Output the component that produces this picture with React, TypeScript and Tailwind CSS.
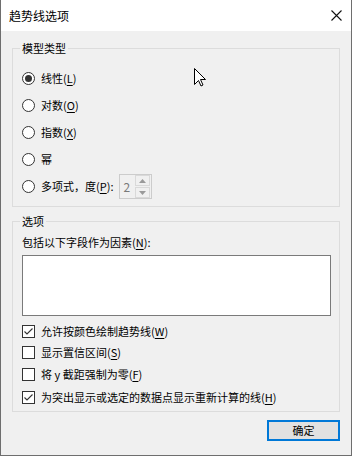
import React from "react";

const font = { fontFamily: '"Noto Sans CJK SC", "Noto Sans", sans-serif' };

function Radio({ checked }: { checked?: boolean }) {
  return (
    <span className="flex h-[13px] w-[13px] shrink-0 items-center justify-center rounded-full border border-[#333333] bg-white">
      {checked && <span className="h-[7px] w-[7px] rounded-full bg-[#333333]" />}
    </span>
  );
}

function Check({ checked }: { checked?: boolean }) {
  return (
    <span className="flex h-[13px] w-[13px] shrink-0 items-center justify-center border border-[#333333] bg-white">
      {checked && (
        <svg viewBox="0 0 11 11" width="11" height="11" fill="none" aria-hidden>
          <polyline points="1.5,5.5 4,8 9.5,2.5" stroke="#333333" strokeWidth="1.1" />
        </svg>
      )}
    </span>
  );
}

// 带下划线的快捷键
function Key({ k }: { k: string }) {
  return (
    <>
      (<u className="underline-offset-2">{k}</u>)
    </>
  );
}

function GroupBox({
  label,
  className,
  children,
}: {
  label: string;
  className?: string;
  children: React.ReactNode;
}) {
  return (
    <div className={`relative border border-[#dcdcdc] ${className ?? ""}`}>
      <span className="absolute -top-[9px] left-[7px] bg-[#f0f0f0] px-[2px] text-[11px] leading-[16px] text-black">
        {label}
      </span>
      {children}
    </div>
  );
}

const radios: { text: React.ReactNode; checked?: boolean }[] = [
  { text: <>线性<Key k="L" /></>, checked: true },
  { text: <>对数<Key k="O" /></> },
  { text: <>指数<Key k="X" /></> },
  { text: <>幂</> },
];

export default function App() {
  return (
    <div
      className="relative flex h-[456px] w-[352px] flex-col border-x border-b border-[#6e6e6e] bg-[#f0f0f0] text-[11px] text-black"
      style={font}
    >
      {/* 标题栏 */}
      <div className="flex h-[31px] shrink-0 items-center justify-between bg-white pl-[8px] pr-[9px]">
        <span className="text-[12px] leading-none">趋势线选项</span>
        <svg viewBox="0 0 11 11" width="11" height="11" aria-hidden>
          <path d="M0.5 0.5 L10.5 10.5 M10.5 0.5 L0.5 10.5" stroke="#111" strokeWidth="1.1" />
        </svg>
      </div>

      <div className="flex flex-col px-[11px]">
        {/* 模型类型 */}
        <GroupBox label="模型类型" className="mt-[17px] pb-[6px] pl-[9px] pt-[16px]">
          {radios.map((r, i) => (
            <div key={i} className="flex h-[27px] items-center gap-[6px]">
              <Radio checked={r.checked} />
              <span className="leading-none">{r.text}</span>
            </div>
          ))}
          <div className="flex h-[27px] items-center gap-[6px]">
            <Radio />
            <span className="leading-none">
              多项式，度<Key k="P" />:
            </span>
            <div className="flex h-[25px] w-[33px] items-center border border-[#cccccc] bg-[#f0f0f0]">
              <span className="flex-1 pl-[3px] text-[12px] text-[#7a7a7a]">2</span>
              <div className="mr-[1px] flex flex-col gap-px">
                <span className="flex h-[11px] w-[15px] items-center justify-center border border-[#d9d9d9]">
                  <svg viewBox="0 0 7 4" width="7" height="4" aria-hidden>
                    <path d="M0 4 L3.5 0 L7 4 Z" fill="#9a9a9a" />
                  </svg>
                </span>
                <span className="flex h-[11px] w-[15px] items-center justify-center border border-[#d9d9d9]">
                  <svg viewBox="0 0 7 4" width="7" height="4" aria-hidden>
                    <path d="M0 0 L3.5 4 L7 0 Z" fill="#9a9a9a" />
                  </svg>
                </span>
              </div>
            </div>
          </div>
        </GroupBox>

        {/* 选项 */}
        <GroupBox label="选项" className="mt-[14px] pb-[4px] pl-[9px] pr-[8px] pt-[12px]">
          <div className="h-[16px] leading-[16px]">
            包括以下字段作为因素<Key k="N" />:
          </div>
          <div className="mt-[5px] h-[61px] w-full border border-[#7a7a7a] bg-white" />
          <div className="mt-[5px] flex h-[20px] items-center gap-[6px]">
            <Check checked />
            <span className="leading-none">
              允许按颜色绘制趋势线<Key k="W" />
            </span>
          </div>
          <div className="mt-px flex h-[20px] items-center gap-[6px]">
            <Check />
            <span className="leading-none">
              显示置信区间<Key k="S" />
            </span>
          </div>
          <div className="mt-[2px] flex h-[20px] items-center gap-[6px]">
            <Check />
            <span className="leading-none">
              将 y 截距强制为零<Key k="F" />
            </span>
          </div>
          <div className="mt-[3px] flex h-[20px] items-center gap-[6px]">
            <Check checked />
            <span className="leading-none">
              为突出显示或选定的数据点显示重新计算的线<Key k="H" />
            </span>
          </div>
        </GroupBox>

        <div className="mt-[8px] flex justify-end">
          <button
            type="button"
            className="flex h-[21px] w-[73px] items-center justify-center border-2 border-[#0078d7] bg-[#e1e1e1] text-[11px] leading-none text-black"
          >
            确定
          </button>
        </div>
      </div>

      {/* 鼠标指针 */}
      <svg
        className="absolute left-[193px] top-[68px]"
        viewBox="0 0 12 19"
        width="12"
        height="19"
        aria-hidden
      >
        <path
          d="M0.5 0.5 L0.5 16.5 L4.5 12.5 L7 18 L9 17 L6.5 11.5 L11.5 11.5 Z"
          fill="#ffffff"
          stroke="#000000"
          strokeWidth="1"
          strokeLinejoin="miter"
        />
      </svg>
    </div>
  );
}
